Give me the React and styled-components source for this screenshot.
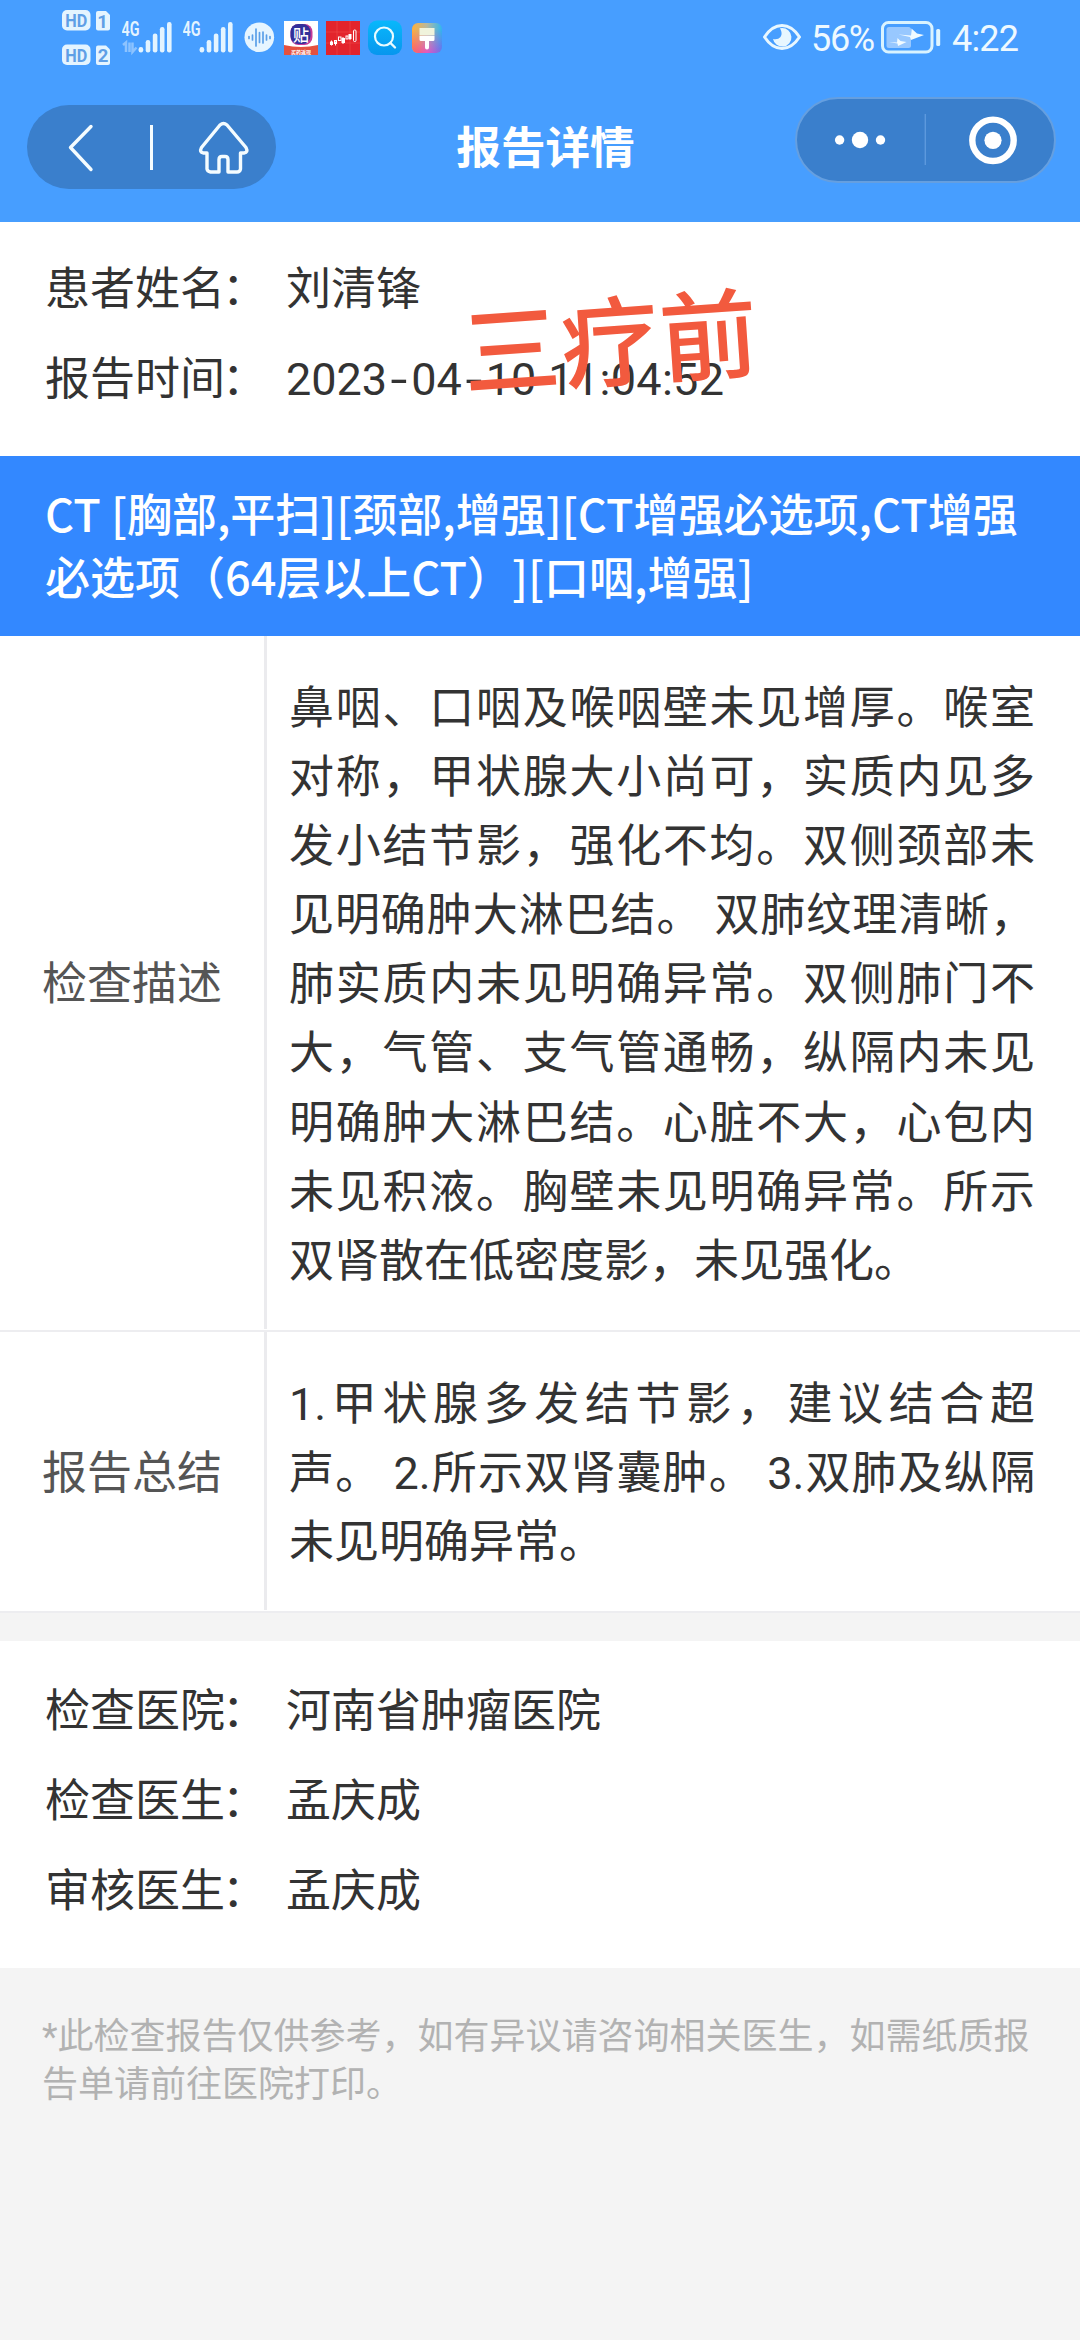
import styled, { createGlobalStyle } from 'styled-components';

const GlobalStyle = createGlobalStyle`
  * { box-sizing: border-box; }
  body {
    margin: 0; background-color: #f4f4f4; color: #333;
    font-family: Roboto, "Noto Sans CJK SC", sans-serif; font-size: 45px;
    text-spacing-trim: space-all;
  }
  svg { display: block; flex: none; }
`;

const Page = styled.div`
  width: 1080px; min-height: 2340px; background-color: #f4f4f4;
`;

const Header = styled.header`
  height: 222px; background-color: #479eff; color: white;
`;

const StatusBar = styled.div`
  display: flex; justify-content: space-between; height: 80px;
  padding: 0 62px;
`;

const StatusGroup = styled.div`
  display: flex;
`;

const StatusText = styled.span`
  width: ${p => p.$width}px; height: 80px; line-height: 79px;
  font-size: 36px; color: #eef9ff;
  letter-spacing: ${p => p.$spacing}px; white-space: nowrap;
`;

const NavBar = styled.div`
  display: grid; grid-template-columns: 249px 1fr 261px;
  height: 142px; padding: 17px 24px 0 27px;
`;

const NavPill = styled.div`
  display: flex; height: 84px; margin-top: 8px;
  border-radius: 42px; background-color: #3a7fcc;
`;

const MiniPill = styled.div`
  display: flex; height: 86px; border-radius: 43px;
  border: 2px solid #659fe0; background-color: #3a7fcc;
`;

const Title = styled.h1`
  margin: 17px 0 0; padding-left: 20px; text-align: center; font-size: 44.6px;
  line-height: 70px; font-weight: 700;
`;

const InfoCard = styled.section`
  position: relative; background-color: white;
  height: ${p => p.$height}px; padding: ${p => p.$top}px 46px 0 45px;
`;

const InfoRow = styled.div`
  display: grid; grid-template-columns: 241px 1fr;
  height: 90px; line-height: 94px; white-space: nowrap;
`;

const Colon = styled.span`
  margin-left: -3px;
`;

const Dash = styled.span`
  display: inline-block; width: 24px; text-align: center;
  transform: scaleX(1.35);
`;

const Time = styled.span`
  margin-left: 12px; letter-spacing: 0.3px;
`;

const Stamp = styled.div`
  position: absolute; left: 462px; top: 54px;
  font-size: 98px; line-height: 140px; font-weight: 500; color: #f25a3e;
  letter-spacing: 1px; white-space: nowrap; transform: rotate(-4deg);
`;

const Banner = styled.section`
  height: 180px; padding: 25px 45px 0; background-color: #3388ff;
  color: white; font-family: "Noto Sans CJK SC", sans-serif;
  font-weight: 500; line-height: 63px; white-space: nowrap;
`;

const ReportRow = styled.section`
  display: grid; grid-template-columns: 267px 1fr;
  background-color: white; border-bottom: 2px solid #ededf0;
`;

const ReportLabel = styled.div`
  display: flex; align-items: center; padding: 0 0 3px 42px; margin-bottom: 1px;
  border-right: 3px solid #ebebee; color: #555;
`;

const ReportText = styled.div`
  padding: 38px 45px 34px 22px; line-height: 69.1px;
`;

const Line = styled.div`
  white-space: nowrap; text-align: justify;
  text-align-last: ${p => (p.$last ? 'left' : 'justify')};
`;

const Gap = styled.div`
  height: 28px;
`;

const Footnote = styled.footer`
  padding: 45px 0 0 42px; font-size: 36px; line-height: 48px; color: #b2b2b2;
  white-space: nowrap;
`;

const description = [
  '鼻咽、口咽及喉咽壁未见增厚。喉室',
  '对称，甲状腺大小尚可，实质内见多',
  '发小结节影，强化不均。双侧颈部未',
  '见明确肿大淋巴结。 双肺纹理清晰，',
  '肺实质内未见明确异常。双侧肺门不',
  '大，气管、支气管通畅，纵隔内未见',
  '明确肿大淋巴结。心脏不大，心包内',
  '未见积液。胸壁未见明确异常。所示',
  '双肾散在低密度影，未见强化。',
];

const summary = [
  '1.甲状腺多发结节影，建议结合超',
  '声。 2.所示双肾囊肿。 3.双肺及纵隔',
  '未见明确异常。',
];

function HdIcon() {
  return (
    <svg width="60" height="80" viewBox="62 0 60 80">
      <g fill="#e4f4ff">
        <rect x="62" y="10" width="28.5" height="20.5" rx="5" />
        <path d="M98 11h8l4 4v13.500q0 2-2 2h-10q-2 0-2-2v-15.500q0-2 2-2z" />
        <rect x="62" y="44.500" width="28.500" height="20.500" rx="5" />
        <path d="M98 45.500h8l4 4v13.500q0 2-2 2h-10q-2 0-2-2v-15.500q0-2 2-2z" />
      </g>
      <g fill="#5f9fe6" fontFamily="Roboto, sans-serif" fontWeight="700" fontSize="18.500" textAnchor="middle">
        <text x="76.300" y="27" textLength="22" lengthAdjust="spacingAndGlyphs">HD</text>
        <text x="102.500" y="27.500">1</text>
        <text x="76.300" y="61.500" textLength="22" lengthAdjust="spacingAndGlyphs">HD</text>
        <text x="103" y="62">2</text>
      </g>
    </svg>
  );
}

function SignalIcon({ arrows }) {
  const tops = [47, 40, 33.5, 27, 22];
  return (
    <svg width="61" height="80" viewBox="0 0 61 80">
      <text x="-.5" y="36" fill="#e4f4ff" fontFamily="Roboto, sans-serif" fontWeight="600" fontSize="19.500" textLength="18" lengthAdjust="spacingAndGlyphs">4G</text>
      {arrows && (
        <path d="M1 45l3-2.500V52M7.500 42.500V52M10.500 42.500V52l4-4.500" fill="none" stroke="#8dc3ff" strokeWidth="2.500" />
      )}
      {tops.map((top, i) => (
        <rect key={top} x={16.600 + i * 7.100} y={top} width="4.600" height={52.500 - top} rx="2.200" fill="#e4f4ff" />
      ))}
    </svg>
  );
}

function WaveIcon() {
  return (
    <svg width="40" height="80" viewBox="244 0 40 80">
      <circle cx="259.300" cy="37.300" r="14.800" fill="#e6f5ff" />
      <path d="M249 36.500v2M252.500 35v5M256 29v17M259.500 32.500v10M263 32v11M266.500 35v5M270 36.500v2" stroke="#5a9fe8" strokeWidth="1.700" strokeLinecap="round" />
    </svg>
  );
}

function TieIcon() {
  return (
    <svg width="42" height="80" viewBox="284 0 42 80">
      <rect x="284" y="21" width="34" height="34" fill="#fff" />
      <rect x="290.500" y="24" width="22" height="21" rx="8" fill="#c33a9a" />
      <rect x="290.500" y="24" width="20" height="20" rx="8" fill="#33309a" />
      <text x="301" y="40.500" fontSize="16" fontWeight="500" textAnchor="middle" fill="#fff">贴</text>
      <path d="M284 45q17 4 34 0v10h-34z" fill="#e4513f" />
      <text x="301" y="53.500" fontSize="5" fontWeight="700" textAnchor="middle" fill="#fff">买药返现</text>
    </svg>
  );
}

function StockIcon() {
  return (
    <svg width="42" height="80" viewBox="326 0 42 80">
      <rect x="326" y="21" width="34" height="34" fill="#e3242c" />
      <path d="M326 32h34M326 43h34M337 21v34M350 21v34" stroke="#ee4a4c" strokeWidth=".6" />
      <path d="M331.500 40.500v5M343 37v7M350 34v6" stroke="#fff" strokeWidth="1" />
      <g fill="none" stroke="#fff" strokeWidth="1">
        <rect x="330.500" y="42" width="2" height="2.500" fill="#fff" />
        <path d="M335.500 45.500v-4" />
        <rect x="334.500" y="40.500" width="2" height="3" />
        <rect x="338.500" y="37" width="2.500" height="3.500" />
        <rect x="342" y="38.500" width="2.500" height="4" fill="#fff" />
        <rect x="346" y="36" width="2" height="3" />
        <rect x="349" y="34.500" width="2" height="4" fill="#fff" />
        <rect x="353.500" y="30" width="2.500" height="11.500" rx="1" />
      </g>
    </svg>
  );
}

function SearchIcon() {
  return (
    <svg width="42" height="80" viewBox="368 0 42 80">
      <defs>
        <linearGradient id="search" x1="0" y1="0" x2="0" y2="1">
          <stop offset="0" stopColor="#08b8fb" />
          <stop offset="1" stopColor="#0796ee" />
        </linearGradient>
      </defs>
      <rect x="368" y="20.500" width="34" height="34.500" rx="9" fill="url(#search)" />
      <circle cx="384" cy="36.500" r="9" fill="none" stroke="#e8fbff" strokeWidth="2.200" />
      <path d="M390.500 43l4.500 4.500" stroke="#e8fbff" strokeWidth="2.400" strokeLinecap="round" />
    </svg>
  );
}

function BrushIcon() {
  return (
    <svg width="34" height="80" viewBox="410 0 34 80">
      <defs>
        <linearGradient id="brushA" x1="0" y1="0" x2="1" y2="0">
          <stop offset="0" stopColor="#ffb03a" />
          <stop offset=".5" stopColor="#b5b8a0" />
          <stop offset="1" stopColor="#2fb6f0" />
        </linearGradient>
        <linearGradient id="brushB" x1="0" y1="0" x2="1" y2="0">
          <stop offset="0" stopColor="#ff5f5f" />
          <stop offset=".5" stopColor="#e455c0" />
          <stop offset="1" stopColor="#6a6cf0" />
        </linearGradient>
        <linearGradient id="fade" x1="0" y1="0" x2="0" y2="1">
          <stop offset=".2" stopColor="#000" />
          <stop offset="1" stopColor="#fff" />
        </linearGradient>
        <mask id="brushMask">
          <rect x="412" y="23" width="30" height="30" fill="url(#fade)" />
        </mask>
      </defs>
      <rect x="412" y="23" width="30" height="30" rx="6" fill="url(#brushA)" />
      <rect x="412" y="23" width="30" height="30" rx="6" fill="url(#brushB)" mask="url(#brushMask)" />
      <path d="M419.500 28h15v7.500h-15z" fill="#f0f3dc" />
      <path d="M419.500 36h15v3.500q0 1.500-1.500 1.500h-4v6.500a2 2 0 0 1-4 0V41h-4q-1.500 0-1.500-1.500z" fill="#fff" />
    </svg>
  );
}

function EyeIcon() {
  return (
    <svg width="48" height="80" viewBox="763 0 48 80">
      <path d="M764.500 37q7.500-11.500 17.500-11.500T799.500 37q-7.500 11.500-17.500 11.500T764.500 37z" fill="none" stroke="#e8f7ff" strokeWidth="3" strokeLinejoin="round" />
      <path d="M782 28a9.300 9.300 0 1 1-9 11q5 1 7.500-2t-.5-8.700z" fill="#e8f7ff" />
    </svg>
  );
}

function BatteryIcon() {
  return (
    <svg width="71" height="80" viewBox="881 0 71 80">
      <rect x="882.500" y="22.500" width="49.500" height="29.500" rx="6" fill="none" stroke="#d9f3ff" strokeWidth="3" />
      <rect x="886.500" y="27" width="24.500" height="21" rx="2.500" fill="#98c8ff" />
      <rect x="936.200" y="29" width="4" height="17" rx="1.500" fill="#e0f6ff" />
      <path d="M898.500 34.500l12.500 1 .5-7 5.500 5 7 1.500-13 5-1-3z" fill="#f2fbff" />
      <path d="M889 42l8 .5.500-4.500 3 3 6 1-8.500 4-.5-2.500z" fill="#f2fbff" />
    </svg>
  );
}

function Info({ label, children }) {
  return (
    <InfoRow>
      <span>{label}<Colon>：</Colon></span>
      <span>{children}</span>
    </InfoRow>
  );
}

function Report({ label, lines }) {
  return (
    <ReportRow>
      <ReportLabel>{label}</ReportLabel>
      <ReportText>
        {lines.map((line, i) => (
          <Line key={i} $last={i === lines.length - 1}>{line}</Line>
        ))}
      </ReportText>
    </ReportRow>
  );
}

export default function App() {
  return (
    <Page>
      <GlobalStyle />
      <Header>
        <StatusBar>
          <StatusGroup>
            <HdIcon />
            <SignalIcon arrows />
            <SignalIcon />
            <WaveIcon />
            <TieIcon />
            <StockIcon />
            <SearchIcon />
            <BrushIcon />
          </StatusGroup>
          <StatusGroup>
            <EyeIcon />
            <StatusText $width={70} $spacing={-1.3}>56%</StatusText>
            <BatteryIcon />
            <StatusText $width={66} $spacing={-0.8}>4:22</StatusText>
          </StatusGroup>
        </StatusBar>

        <NavBar>
          <NavPill>
            <svg width="249" height="84" viewBox="27 105 249 84" fill="none" stroke="#f4fcff">
              <path d="M91 126.500L70.500 147.500L91 169.500" strokeWidth="3.400" strokeLinecap="round" strokeLinejoin="round" />
              <path d="M151.500 125v45" strokeWidth="3" />
              <path d="M220 125q3.500-3 7 0l19 22.500q2.500 5-2 5.500h-3.500v16q-.5 3-3.500 3h-9v-12.500q0-3-3-3h-3q-3 0-3 3V172h-8.500q-3-.500-3.500-3v-16h-3.500q-4.500-.5-2-5.500z" strokeWidth="3.400" strokeLinejoin="round" />
            </svg>
          </NavPill>
          <Title>报告详情</Title>
          <MiniPill>
            <svg width="257" height="82" viewBox="797 99 257 82" fill="#fff">
              <circle cx="839.600" cy="140" r="4.700" />
              <circle cx="860" cy="140" r="8.200" />
              <circle cx="880.500" cy="140" r="4.700" />
              <rect x="924.700" y="114" width="1" height="51" fill="#6ba4e4" />
              <circle cx="993" cy="140.300" r="20.700" fill="none" stroke="#fff" strokeWidth="6.400" />
              <circle cx="993" cy="140.300" r="8.600" />
            </svg>
          </MiniPill>
        </NavBar>
      </Header>

      <InfoCard $height={234} $top={21}>
        <Info label="患者姓名">刘清锋</Info>
        <Info label="报告时间">
          2023<Dash>-</Dash>04<Dash>-</Dash>10<Time>11:04:52</Time>
        </Info>
        <Stamp>三疗前</Stamp>
      </InfoCard>

      <Banner>
        <div>CT [胸部,平扫][颈部,增强][CT增强必选项,CT增强</div>
        <div>必选项（64层以上CT）][口咽,增强]</div>
      </Banner>

      <Report label="检查描述" lines={description} />
      <Report label="报告总结" lines={summary} />

      <Gap />

      <InfoCard $height={327} $top={24}>
        <Info label="检查医院">河南省肿瘤医院</Info>
        <Info label="检查医生">孟庆成</Info>
        <Info label="审核医生">孟庆成</Info>
      </InfoCard>

      <Footnote>
        *此检查报告仅供参考，如有异议请咨询相关医生，如需纸质报<br />
        告单请前往医院打印。
      </Footnote>
    </Page>
  );
}
